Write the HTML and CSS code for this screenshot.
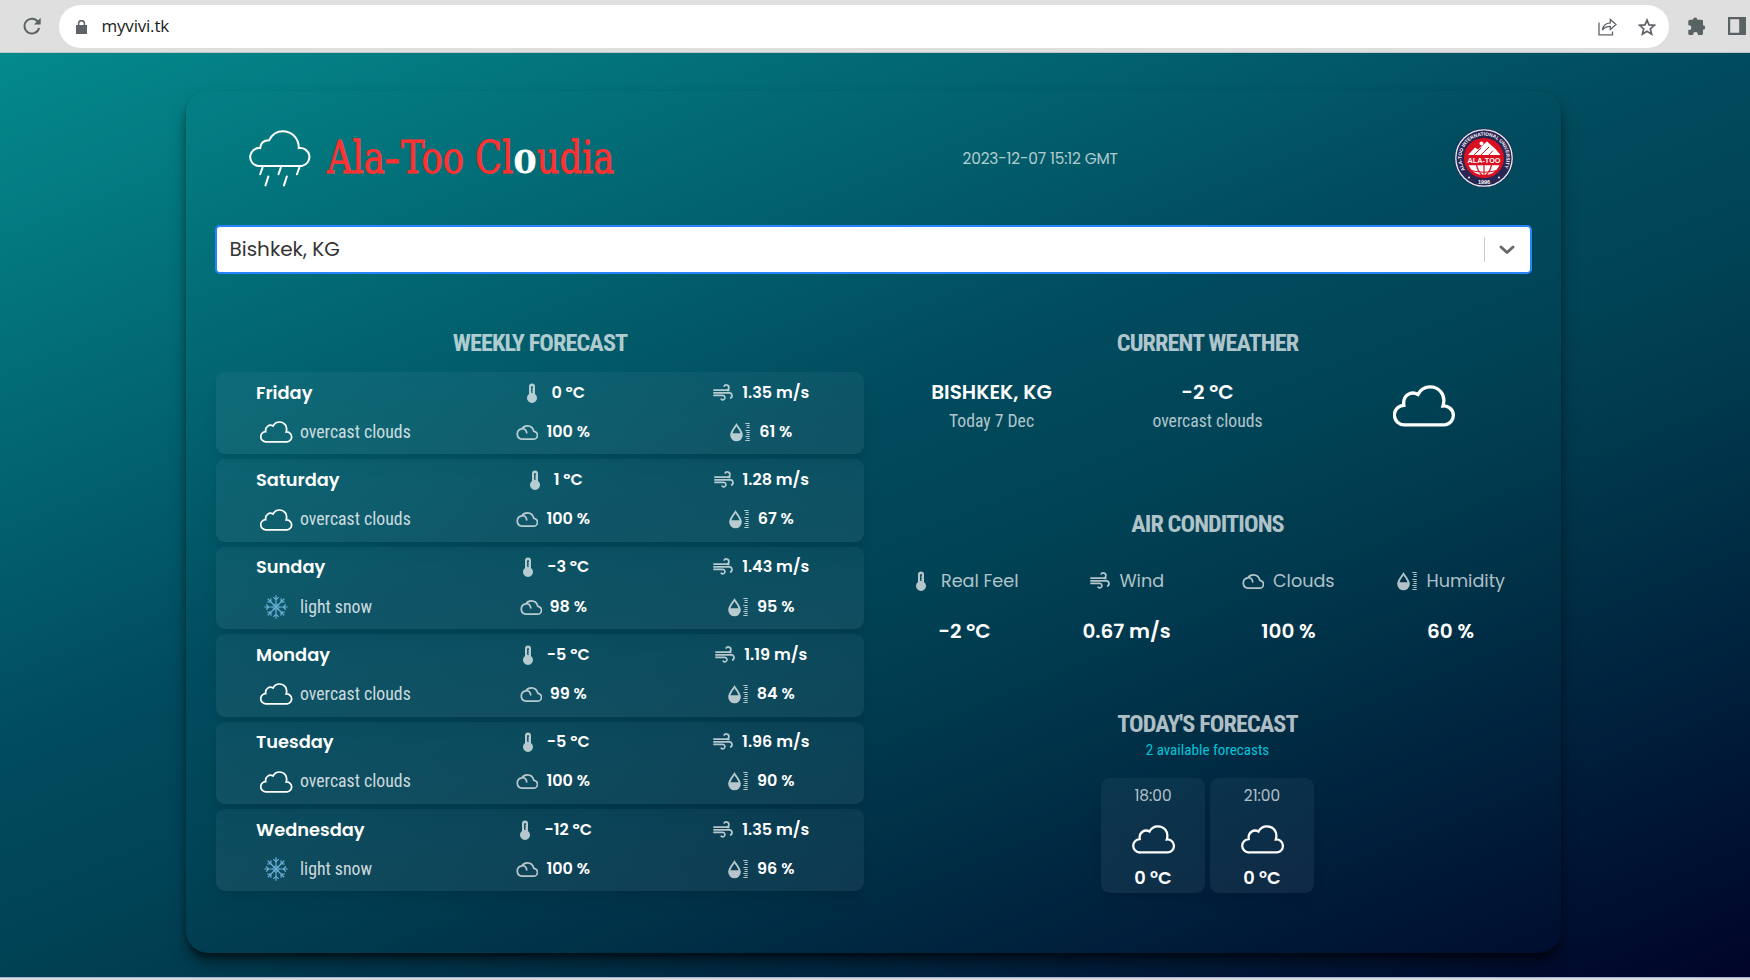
FILE: index.html
```html
<!DOCTYPE html>
<html lang="en">
<head>
<meta charset="utf-8">
<title>Ala-Too Cloudia</title>
<link rel="stylesheet" href="styles.css">
</head>
<body>
<svg class="defs" width="0" height="0" aria-hidden="true">
  <symbol id="i-temp" viewBox="0 0 22 22">
    <path fill="currentColor" fill-rule="evenodd" d="M11 1.600a3 3 0 0 1 3 3v7.400a5 5 0 1 1-6 0V4.600a3 3 0 0 1 3-3zM10.100 4.200v6.600h1.800V9.800h-.8V8.800h.8V7.600h-.8V6.600h.8V4.200z"/>
  </symbol>
  <symbol id="i-cloud" viewBox="0 0 22 22">
    <path fill="none" stroke="currentColor" stroke-width="1.700" stroke-linecap="round" d="M5.600 18.100H17.300a3.900 3.900 0 0 0 .5-7.800C17 6.900 14.400 4.900 11.400 4.900c-2.300 0-4.200 1-5.400 2.900A5.200 5.200 0 0 0 5.600 18.100zM6 7.800c2.500-.4 4.500 1.200 4.700 4.100"/>
  </symbol>
  <symbol id="i-wind" viewBox="0 0 22 22">
    <path fill="none" stroke="currentColor" stroke-width="1.700" d="M1.300 8.200h13a2.600 2.600 0 1 0-2.400-3.600M1.300 10.800h15.800a2.700 2.700 0 0 1 .9 5.300M1.300 13.400h9.500a2.200 2.200 0 1 1-2 3.200M15 8.300h2.500"/>
  </symbol>
  <symbol id="i-humid" viewBox="0 0 22 22">
    <path fill="currentColor" fill-rule="evenodd" d="M7.500 2C9 5 13.800 9.800 13.800 14a6.300 6.300 0 0 1-12.600 0C1.200 9.800 6 5 7.500 2zM7.500 5.200C6.300 7.300 4.200 9.700 3.500 12.200h8C10.800 9.700 8.700 7.300 7.500 5.200z"/>
    <path fill="none" stroke="currentColor" stroke-width="1" d="M16.300 2.500h4.400M17.500 4.500h3.200M17.500 6.500h3.200M16.300 9.500h4.400M17.500 11.500h3.200M17.500 13.500h3.200M16.300 15.500h4.400M17.500 17.500h3.200M16.300 19.500h4.400"/>
  </symbol>
  <symbol id="w-cloud" viewBox="0 0 63 42">
    <path fill="none" stroke="currentColor" stroke-width="3.300" stroke-linejoin="miter" d="M11.500 39.800H51.800A9 9 0 0 0 50 21C53.500 9 45.500 1.900 37 1.900C31.500 1.900 27.500 4.500 25 9.500C18 5.500 9.500 10.500 10.800 20.300A9 9 0 0 0 11.500 39.800Z"/>
  </symbol>
  <symbol id="w-snow" viewBox="-12 -12 24 24">
    <g fill="none" stroke="#6bb1d9" stroke-width="1.150">
      <path id="arm" d="M0 0V-11.700M-2.700-9.800 0-7.200 2.700-9.800"/>
      <use href="#arm" transform="rotate(45)"/><use href="#arm" transform="rotate(90)"/>
      <use href="#arm" transform="rotate(135)"/><use href="#arm" transform="rotate(180)"/>
      <use href="#arm" transform="rotate(225)"/><use href="#arm" transform="rotate(270)"/>
      <use href="#arm" transform="rotate(315)"/>
      <path d="M0-3.200 2.300-2.300 3.200 0 2.300 2.300 0 3.200-2.300 2.300-3.200 0-2.300-2.300z" stroke-width=".7"/>
    </g>
  </symbol>
</svg>

<header class="toolbar">
  <svg class="reload" viewBox="0 0 18 18"><path fill="none" stroke="#5a6363" stroke-width="2" d="M15.300 5.300A7.400 7.400 0 1 0 16.100 11"/><path fill="#5a6363" d="M17.700.8v6.700H11z"/></svg>
  <div class="omnibox">
    <svg class="lock" viewBox="0 0 11 14"><path fill="#5f6368" d="M0 5h11v9H0z"/><path fill="none" stroke="#5f6368" stroke-width="1.500" d="M2.600 5.500V3.600a2.900 2.900 0 0 1 5.800 0v1.900"/></svg>
    <span class="url">myvivi.tk</span>
    <svg class="share" viewBox="0 0 19 18"><path fill="none" stroke="#5f6368" stroke-width="1.300" d="M1 4.500V16.800H14.500V13.500M4.300 12.200C5 7.500 8 5 12.300 4.800V1.500L18 6.600 12.300 11.500V8.400C8.500 8.400 6 9.600 4.300 12.200z"/></svg>
    <svg class="star" viewBox="0 0 18 18"><path fill="none" stroke="#5f6368" stroke-width="1.700" d="M9 2 11 6.900 16.400 7.300 12.300 10.800 13.600 16.200 9 13.300 4.400 16.200 5.700 10.800 1.600 7.300 7 6.900z"/></svg>
  </div>
  <svg class="puzzle" viewBox="0 0 18 18"><path fill="#5a6363" d="M5 2.800a2.200 2.200 0 0 1 4.400 0h4.100A1.500 1.500 0 0 1 15 4.300v4a2.200 2.200 0 0 1 0 4.400v3.800a1.500 1.500 0 0 1-1.500 1.500H9.900v-.5a2.400 2.400 0 0 0-4.800 0v.5H1.800A1.500 1.500 0 0 1 .3 16.500v-3.400H1a2.400 2.400 0 0 0 0-4.800H.3v-4A1.500 1.500 0 0 1 1.800 2.800z"/></svg>
  <svg class="panel" viewBox="0 0 18 18"><path fill="#5a6363" fill-rule="evenodd" d="M0 0h18v18H0zM2.200 2.200v13.600h9V2.200z"/></svg>
</header>

<main class="page">
  <div class="card">
    <div class="brand">
      <svg class="brand-cloud" viewBox="0 0 63 56"><g fill="none" stroke="#fff" stroke-width="2" stroke-linecap="round"><path d="M10 35.300H53A8 8 0 0 0 50 17.700C50 7 42 1.100 34.300 1.100C28 1.100 23.500 4.500 20.800 10C15.500 10 12.400 12.800 12 17.700A8 8 0 0 0 10 35.300Z"/><path d="M14.300 37 12 43.500M32.300 37 30 43.500M50.500 37 48.200 43.500M20 45.700 17.200 54.500M38.200 45.700 35.400 54.500"/></g></svg>
      <h1 class="brand-name">Ala<span class="dash">-</span>Too Cl<b>o</b>udia</h1>
      <time class="date">2023-12-07 15:12 GMT</time>
      <svg class="seal" viewBox="0 0 60 60">
        <circle cx="30" cy="30" r="29.500" fill="#2a2653"/>
        <circle cx="30" cy="30" r="28.200" fill="none" stroke="#e9e9f2" stroke-width="1.300"/>
        <circle cx="30" cy="30" r="20" fill="#da1022"/>
        <path fill="#fff" d="M14 27 21 19.500 24 21.500 33 13.500 41.500 21 46.500 27z"/>
        <circle cx="27.500" cy="15.500" r="2" fill="#fff"/>
        <path stroke="#da1022" stroke-width="1" d="M20 27 27 20M27 27 35 19M35 27 39 22.500"/>
        <path fill="#fff" d="M14.500 37.200H45.500A17.200 17.200 0 0 1 14.500 37.200z"/>
        <path fill="none" stroke="#da1022" stroke-width="1.200" d="M30 37v11M22.500 37q1.500 7 6 10.500M37.500 37q-1.500 7-6 10.500M17 42.500q13 3.500 26 0"/>
        <text class="seal-name" x="30" y="34.500" text-anchor="middle" textLength="33" lengthAdjust="spacingAndGlyphs">ALA-TOO</text>
        <path id="ring" fill="none" d="M12.100 43.500A22.400 22.400 0 1 1 47.900 43.500"/>
        <text class="seal-ring"><textPath href="#ring" startOffset="2">ALA-TOO INTERNATIONAL UNIVERSITY</textPath></text>
        <text class="seal-ring year" x="30" y="56.200" text-anchor="middle">1996</text>
        <circle cx="15" cy="49.500" r=".9" fill="#fff"/><circle cx="45" cy="49.500" r=".9" fill="#fff"/>
      </svg>
    </div>

    <div class="select">
      <span class="select-value">Bishkek, KG</span>
      <span class="select-sep"></span>
      <svg class="chevron" viewBox="0 0 16 10"><path fill="none" stroke="#666" stroke-width="2.900" stroke-linecap="round" stroke-linejoin="round" d="M2 2 8 7.500 14 2"/></svg>
    </div>

    <div class="columns">
      <section class="weekly">
        <h2>WEEKLY FORECAST</h2>
        <div class="days">
          <article class="day">
            <h3>Friday</h3>
            <p class="stat"><svg><use href="#i-temp"/></svg>0 ºC</p>
            <p class="stat"><svg><use href="#i-wind"/></svg>1.35 m/s</p>
            <p class="sky"><svg class="cloud"><use href="#w-cloud"/></svg>overcast clouds</p>
            <p class="stat"><svg><use href="#i-cloud"/></svg>100 %</p>
            <p class="stat"><svg><use href="#i-humid"/></svg>61 %</p>
          </article>
          <article class="day">
            <h3>Saturday</h3>
            <p class="stat"><svg><use href="#i-temp"/></svg>1 ºC</p>
            <p class="stat"><svg><use href="#i-wind"/></svg>1.28 m/s</p>
            <p class="sky"><svg class="cloud"><use href="#w-cloud"/></svg>overcast clouds</p>
            <p class="stat"><svg><use href="#i-cloud"/></svg>100 %</p>
            <p class="stat"><svg><use href="#i-humid"/></svg>67 %</p>
          </article>
          <article class="day">
            <h3>Sunday</h3>
            <p class="stat"><svg><use href="#i-temp"/></svg>-3 ºC</p>
            <p class="stat"><svg><use href="#i-wind"/></svg>1.43 m/s</p>
            <p class="sky"><svg class="snow"><use href="#w-snow"/></svg>light snow</p>
            <p class="stat"><svg><use href="#i-cloud"/></svg>98 %</p>
            <p class="stat"><svg><use href="#i-humid"/></svg>95 %</p>
          </article>
          <article class="day">
            <h3>Monday</h3>
            <p class="stat"><svg><use href="#i-temp"/></svg>-5 ºC</p>
            <p class="stat"><svg><use href="#i-wind"/></svg>1.19 m/s</p>
            <p class="sky"><svg class="cloud"><use href="#w-cloud"/></svg>overcast clouds</p>
            <p class="stat"><svg><use href="#i-cloud"/></svg>99 %</p>
            <p class="stat"><svg><use href="#i-humid"/></svg>84 %</p>
          </article>
          <article class="day">
            <h3>Tuesday</h3>
            <p class="stat"><svg><use href="#i-temp"/></svg>-5 ºC</p>
            <p class="stat"><svg><use href="#i-wind"/></svg>1.96 m/s</p>
            <p class="sky"><svg class="cloud"><use href="#w-cloud"/></svg>overcast clouds</p>
            <p class="stat"><svg><use href="#i-cloud"/></svg>100 %</p>
            <p class="stat"><svg><use href="#i-humid"/></svg>90 %</p>
          </article>
          <article class="day">
            <h3>Wednesday</h3>
            <p class="stat"><svg><use href="#i-temp"/></svg>-12 ºC</p>
            <p class="stat"><svg><use href="#i-wind"/></svg>1.35 m/s</p>
            <p class="sky"><svg class="snow"><use href="#w-snow"/></svg>light snow</p>
            <p class="stat"><svg><use href="#i-cloud"/></svg>100 %</p>
            <p class="stat"><svg><use href="#i-humid"/></svg>96 %</p>
          </article>
        </div>
      </section>

      <section class="today">
        <h2>CURRENT WEATHER</h2>
        <div class="current">
          <div><p class="big">BISHKEK, KG</p><p class="note">Today 7 Dec</p></div>
          <div><p class="big">-2 ºC</p><p class="note">overcast clouds</p></div>
          <svg class="current-cloud"><use href="#w-cloud"/></svg>
        </div>

        <h2>AIR CONDITIONS</h2>
        <div class="air">
          <div><p class="label"><svg><use href="#i-temp"/></svg>Real Feel</p><p class="big">-2 ºC</p></div>
          <div><p class="label"><svg><use href="#i-wind"/></svg>Wind</p><p class="big">0.67 m/s</p></div>
          <div><p class="label"><svg><use href="#i-cloud"/></svg>Clouds</p><p class="big">100 %</p></div>
          <div><p class="label"><svg><use href="#i-humid"/></svg>Humidity</p><p class="big">60 %</p></div>
        </div>

        <h2>TODAY'S FORECAST</h2>
        <p class="available">2 available forecasts</p>
        <div class="hours">
          <div class="hour"><span class="time">18:00</span><svg><use href="#w-cloud"/></svg><span class="deg">0 ºC</span></div>
          <div class="hour"><span class="time">21:00</span><svg><use href="#w-cloud"/></svg><span class="deg">0 ºC</span></div>
        </div>
      </section>
    </div>
  </div>
</main>
</body>
</html>
```
FILE: styles.css
```css
* { box-sizing: border-box; margin: 0; padding: 0; }

body {
  width: 1750px;
  height: 980px;
  overflow: hidden;
  display: flex;
  flex-direction: column;
  background: #d8dae6;
  font-family: Poppins, Inter, sans-serif;
  color: #fff;
}

svg { display: block; flex: none; }
.defs { position: absolute; }

/* Browser toolbar */
.toolbar {
  height: 53px;
  flex: none;
  display: flex;
  align-items: center;
  background: #dfdfdf;
  border-bottom: 1px solid #bfc6c6;
  padding-left: 23px;
}
.reload { width: 18px; height: 18px; }
.omnibox {
  width: 1610px;
  height: 43px;
  margin-left: 18px;
  margin-top: 1px;
  display: flex;
  align-items: center;
  background: #fff;
  border-radius: 22px;
  padding: 0 13.500px 0 17px;
}
.lock { width: 11px; height: 14px; }
.url {
  flex: 1;
  margin: -1px 0 0 14.500px;
  color: #202124;
  font: 400 17px/24px "Open Sans", sans-serif;
  letter-spacing: -.2px;
}
.share { width: 19px; height: 18px; }
.star { width: 18px; height: 18px; margin-left: 21px; }
.puzzle { width: 18px; height: 18px; margin-left: 19px; }
.panel { width: 18px; height: 18px; margin-left: 21.500px; }

/* Page */
.page {
  height: 925px;
  flex: none;
  padding: 38px 189px 0 186px;
  background: linear-gradient(158deg, #048a8c 0%, #014b5e 43%, #014356 55%, #003248 69%, #00203c 81%, #000428 100%);
  border-bottom: 1px solid #aab4c8;
}
.card {
  height: 862px;
  padding: 31px 29px 0 29px;
  border-radius: 22px;
  box-shadow: 0 11px 16.500px -3.300px rgba(0, 0, 0, .5), 0 4.400px 6.600px -2.200px rgba(0, 0, 0, .5);
}

.brand {
  display: flex;
  align-items: center;
  height: 72px;
  padding: 0 18.500px 0 32.500px;
}
.brand-cloud { width: 64px; height: 57px; }
.brand-name {
  width: 290px;
  margin-left: 15.500px;
  font: 400 44px/52px "DejaVu Serif Condensed", "DejaVu Serif", serif;
  font-stretch: condensed;
  color: #ff3131;
  -webkit-text-stroke: .8px currentColor;
  white-space: nowrap;
  transform: scaleX(.89);
  transform-origin: 0 50%;
}
.brand-name b { color: #fff; -webkit-text-stroke: 0; }
.dash { display: inline-block; margin-right: 5px; transform: scaleX(1.350); transform-origin: 0 50%; }
.date {
  margin-left: 345.500px;
  padding-top: 2px;
  font-size: 15.400px;
  letter-spacing: -.17px;
  line-height: 20px;
  color: rgba(255, 255, 255, .7);
}
.seal { width: 60px; height: 60px; margin-left: auto; }
.seal-name { font: 700 8px "Liberation Sans", sans-serif; fill: #fff; }
.seal-ring { font: 700 4.800px "Liberation Sans", sans-serif; fill: #fff; }
.year { font-size: 5.500px; }

.select {
  height: 49px;
  margin-top: 31px;
  display: flex;
  align-items: center;
  background: #fff;
  border: 2px solid #2684ff;
  border-radius: 5px;
  padding: 0 15px 0 12.500px;
}
.select-value { flex: 1; margin-top: -2px; font-size: 20px; line-height: 30px; color: #333; }
.select-sep { width: 1px; height: 25px; background: #ccc; }
.chevron { width: 16px; height: 10px; margin-left: 14.500px; }

.columns { display: grid; grid-template-columns: 648px 648px; column-gap: 19.500px; margin: 57px 0 0 1px; }

h2 {
  height: 24px;
  font: 700 24.200px/24px "Roboto Condensed", sans-serif;
  letter-spacing: -.9px;
  text-align: center;
  color: rgba(255, 255, 255, .7);
}

/* Weekly forecast */
.days { display: grid; row-gap: 5px; margin-top: 17px; }
.day {
  height: 82.400px;
  display: grid;
  grid-template: 39.200px 39.200px / 233px 207.500px 207.500px;
  align-items: center;
  padding-top: 1px;
  border-radius: 9px;
  background: linear-gradient(0deg, rgba(255, 255, 255, .06), rgba(171, 203, 222, .06));
  box-shadow: 0 11px 16.500px -3.300px rgba(0, 0, 0, .06), 0 4.400px 6.600px -2.200px rgba(0, 0, 0, .06);
}
.day h3 { padding-left: 40px; font-size: 17.800px; font-weight: 600; line-height: 24px; }
.stat {
  display: flex;
  align-items: center;
  justify-content: center;
  gap: 8px;
  padding-left: 1px;
  font-size: 16px;
  font-weight: 600;
  line-height: 24px;
}
.stat svg, .label svg { width: 22px; height: 22px; color: rgba(255, 255, 255, .7); }
.sky {
  display: flex;
  align-items: center;
  padding-left: 44px;
  font: 400 17.800px/24px "Roboto Condensed", sans-serif;
  color: rgba(255, 255, 255, .8);
}
.sky svg { color: #fff; }
.sky .cloud { width: 33px; height: 22px; margin: 1px 7px 0 0; }
.sky .snow { width: 24px; height: 24px; margin: 1px 12px 0 4px; }

/* Current weather */
.current { display: grid; grid-template-columns: repeat(3, 1fr); height: 139px; margin-top: 18px; text-align: center; }
.big { font-size: 20px; font-weight: 600; line-height: 30px; }
.current .big { margin-top: 4px; }
.note { margin-top: 1.500px; font: 400 17.700px/24px "Roboto Condensed", sans-serif; color: rgba(255, 255, 255, .7); }
.current-cloud { width: 63px; height: 42px; margin: 12px 75.500px 0 77.500px; }

/* Air conditions */
.air { display: grid; grid-template-columns: repeat(4, 1fr); height: 143px; margin-top: 33px; text-align: center; }
.label {
  display: flex;
  align-items: center;
  justify-content: center;
  gap: 8.500px;
  height: 24px;
  font-size: 17.600px;
  color: rgba(255, 255, 255, .7);
}
.air .big { margin-top: 23px; }

/* Hourly forecast */
.available {
  margin-top: 4px;
  font: 400 15.100px/20px "Roboto Condensed", sans-serif;
  text-align: center;
  color: #04c4d9;
}
.hours { display: flex; justify-content: center; gap: 5px; margin-top: 18px; }
.hour {
  width: 104px;
  height: 115px;
  display: flex;
  flex-direction: column;
  align-items: center;
  padding-top: 8px;
  border-radius: 9px;
  background: linear-gradient(0deg, rgba(255, 255, 255, .06), rgba(171, 203, 222, .06));
  box-shadow: 0 11px 16.500px -3.300px rgba(0, 0, 0, .06), 0 4.400px 6.600px -2.200px rgba(0, 0, 0, .06);
}
.hour svg { width: 44px; height: 29px; margin: 19px 0 0 1px; }
.time { font-size: 15.400px; line-height: 20px; color: rgba(255, 255, 255, .7); }
.deg { margin-top: 12px; font-size: 17.800px; font-weight: 600; line-height: 24px; }
```
